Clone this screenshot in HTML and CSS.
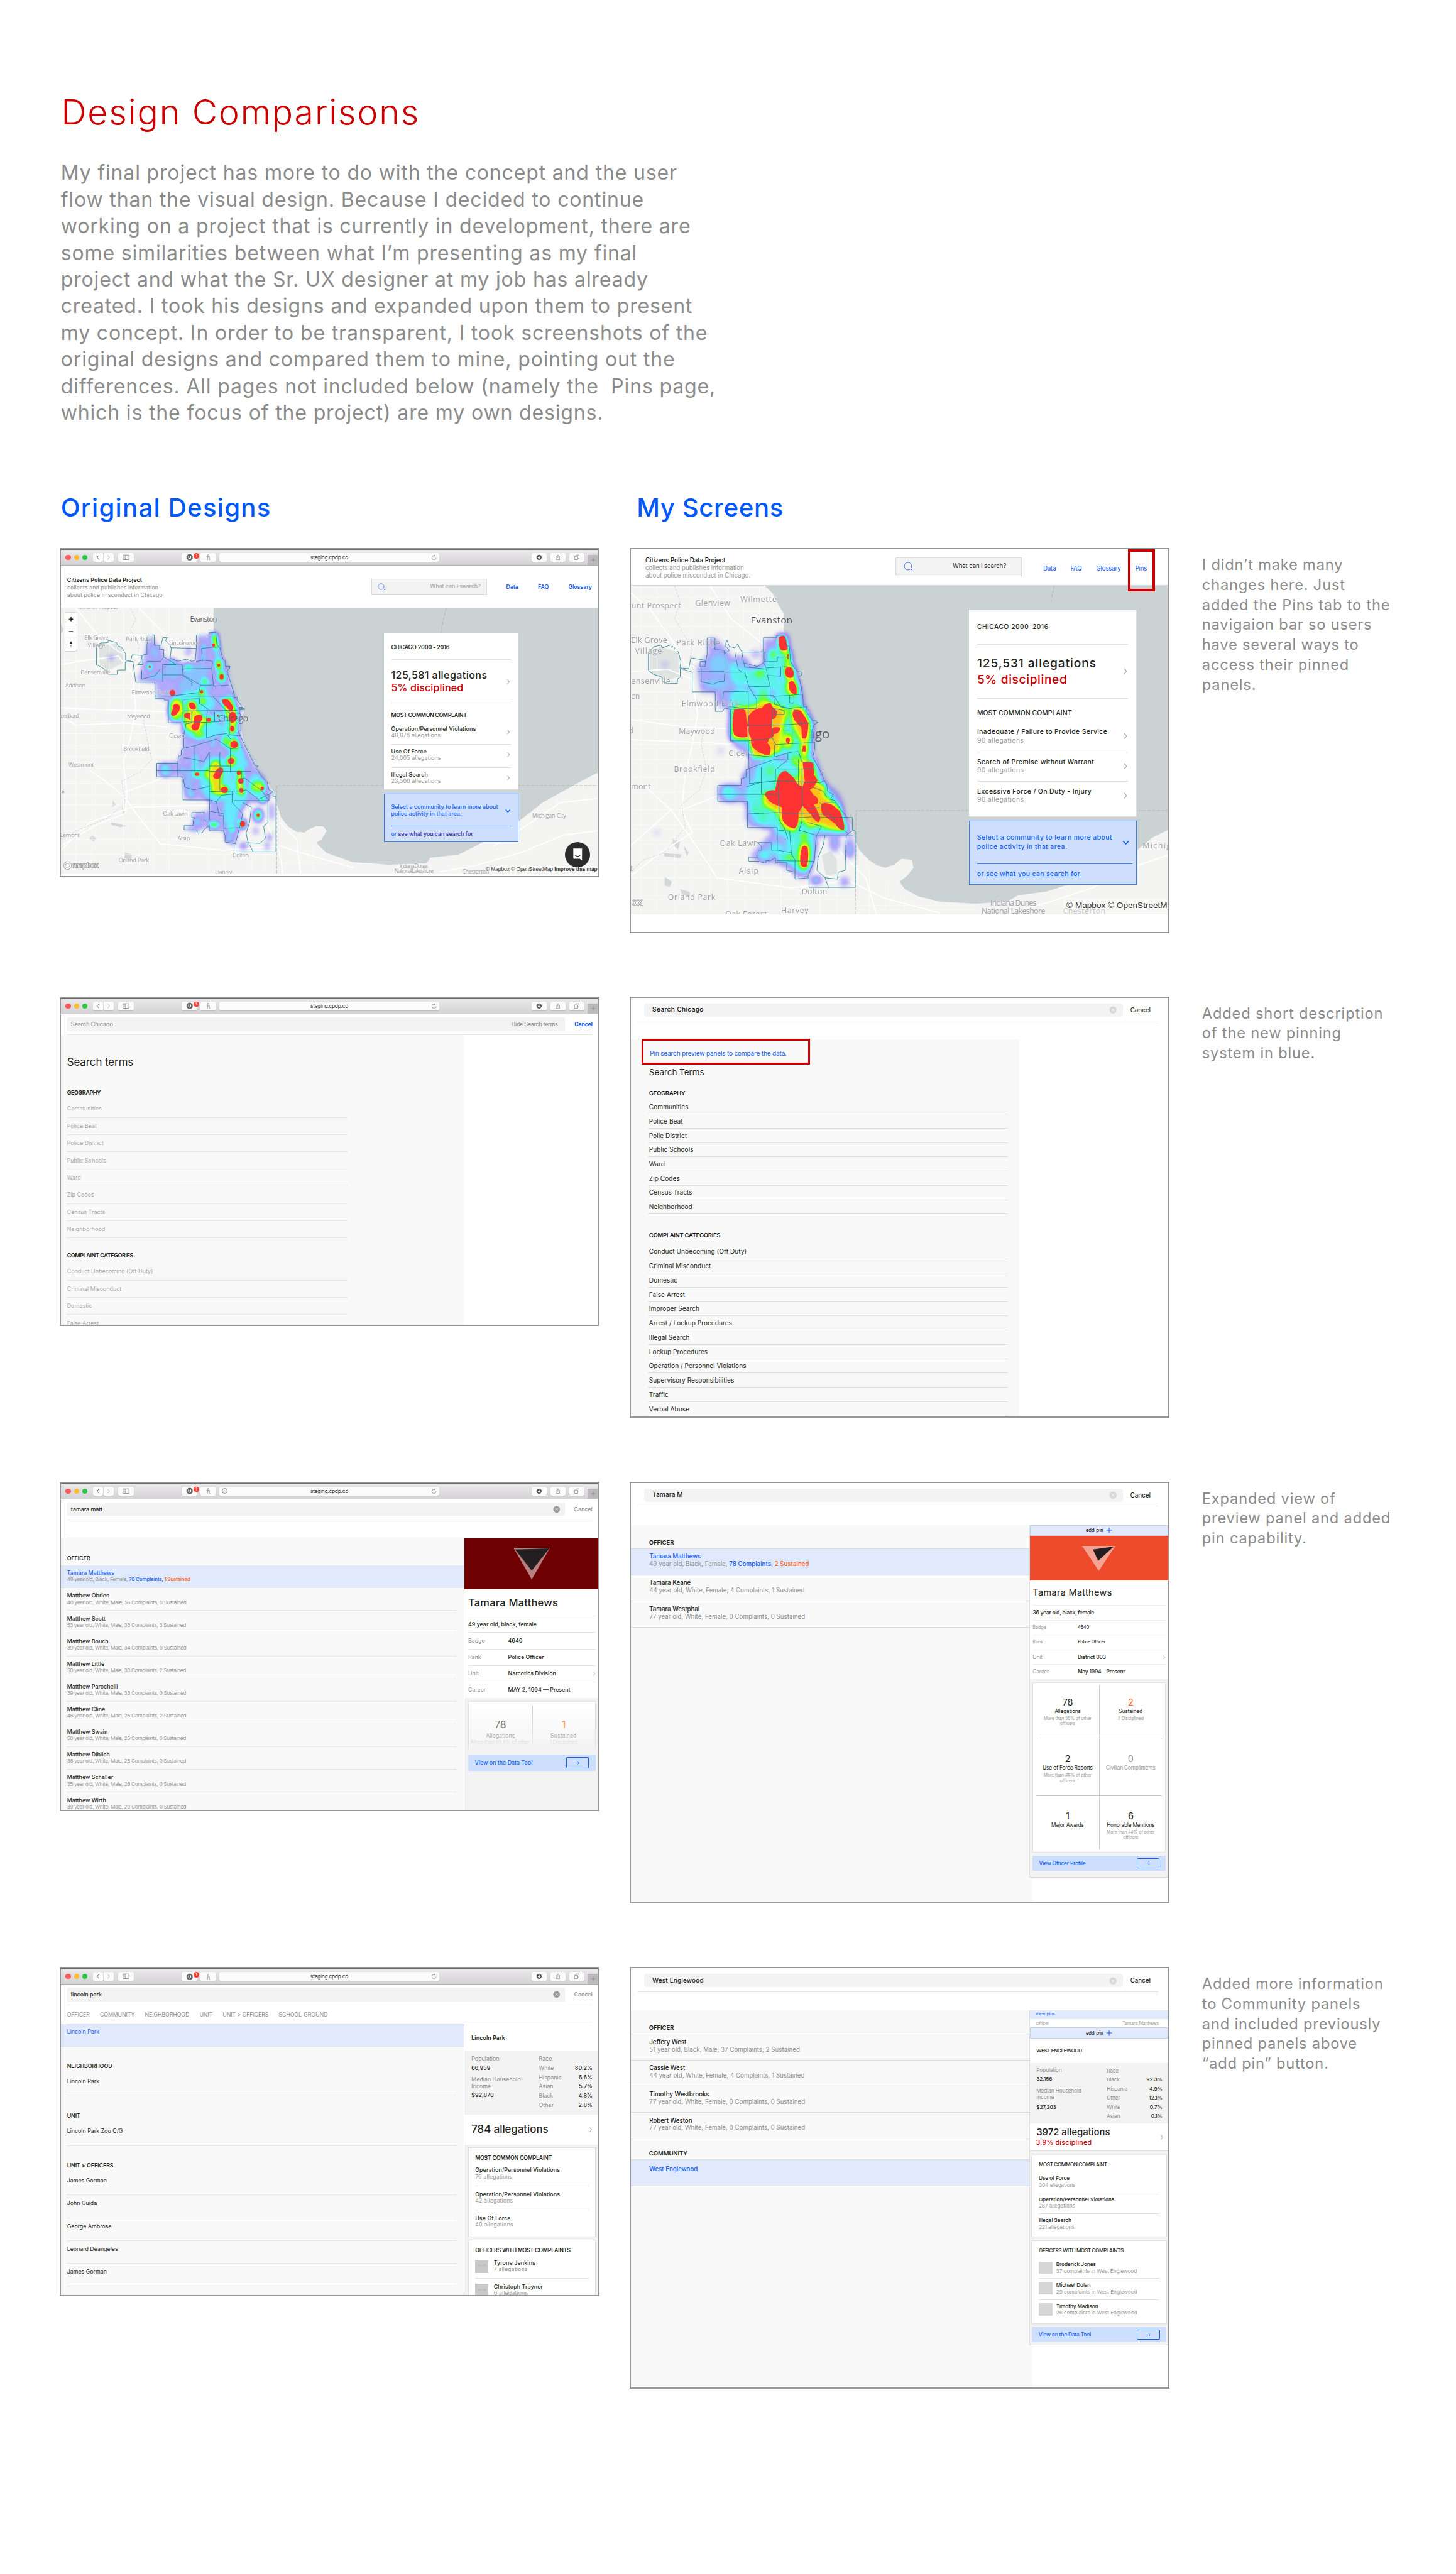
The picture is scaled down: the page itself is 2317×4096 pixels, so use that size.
FILE: index.html
```html
<!DOCTYPE html>
<html lang="en">
<head>
<meta charset="utf-8">
<title>Design Comparisons</title>
<link rel="stylesheet" href="styles.css">
</head>
<body>
<svg class="defs" aria-hidden="true">
  <defs>
    <symbol id="back" viewBox="0 0 10 12"><path d="M7 1.8 3.2 6 7 10.2" fill="none" stroke="#555" stroke-width="1.1"/></symbol>
    <symbol id="fwd" viewBox="0 0 10 12"><path d="M3 1.8 6.8 6 3 10.2" fill="none" stroke="#aaa" stroke-width="1.1"/></symbol>
    <symbol id="side" viewBox="0 0 14 12"><path d="M1 1.5h11.5v9H1zM5 1.5v9M2.3 3.5h1.4M2.3 5.2h1.4M2.3 6.9h1.4" fill="none" stroke="#777" stroke-width=".9"/></symbol>
    <symbol id="ublock" viewBox="0 0 14 14"><path d="M4.6 1h4.8L13 4.600v4.800L9.400 13H4.600L1 9.400V4.600z" fill="#666"/><path d="M5 4.200v3.400a2 2 0 0 0 4 0V4.200" fill="none" stroke="#fff" stroke-width="1.600"/></symbol>
    <symbol id="honey" viewBox="0 0 12 14"><path d="M2 5.500C4 5 5.500 4 5.700 2.500S4.400 1.200 4.300 3L4 12.500M4.200 8.500C5.500 6 8 6 7.800 8.500c-.2 2-.6 4 1.600 3.600M4.500 5.500h4" fill="none" stroke="#999" stroke-width="1"/></symbol>
    <symbol id="reload" viewBox="0 0 12 12"><path d="M9.700 6.500A4 4 0 1 1 6 2.500h1" fill="none" stroke="#777" stroke-width=".9"/><path d="M5.500.8 8 2.500 5.500 4.300z" fill="#777"/></symbol>
    <symbol id="down" viewBox="0 0 12 12"><circle cx="6" cy="6" r="5.200" fill="#555"/><path d="M6 2.800v5M3.700 6 6 8.400 8.300 6" fill="none" stroke="#fff" stroke-width="1.400"/></symbol>
    <symbol id="share" viewBox="0 0 12 14"><path d="M4 5.200H2v7h8v-7H8M6 9V1.500M3.900 3.400 6 1.300l2.100 2.100" fill="none" stroke="#777" stroke-width=".9"/></symbol>
    <symbol id="tabs" viewBox="0 0 12 12"><path d="M1.500 4h6.300v6.500H1.500zM4 4V1.500h6.500v6.300H7.800" fill="none" stroke="#777" stroke-width=".9"/></symbol>
    <symbol id="plus" viewBox="0 0 12 12"><path d="M6 .8v10.400M.8 6h10.400" fill="none" stroke="currentColor" stroke-width="1.200"/></symbol>
    <symbol id="lens" viewBox="0 0 16 16"><circle cx="7" cy="7" r="6" fill="none" stroke="#2f6fee" stroke-width="1"/><path d="m11.300 11.300 3.900 3.900" stroke="#2f6fee" stroke-width="1"/></symbol>
    <symbol id="chev" viewBox="0 0 8 12"><path d="M2 1.500 5.800 6 2 10.500" fill="none" stroke="currentColor" stroke-width="1.300"/></symbol>
    <symbol id="chevdown" viewBox="0 0 12 8"><path d="M2 1.800 6 6l4-4.200" fill="none" stroke="#1463f3" stroke-width="1.600"/></symbol>
    <symbol id="clear" viewBox="0 0 14 14"><circle cx="7" cy="7" r="6.500" fill="currentColor"/><path d="m4.800 4.800 4.400 4.400m0-4.400L4.800 9.200" stroke="#fff" stroke-width=".9"/></symbol>
    <symbol id="arrow" viewBox="0 0 10 8"><path d="M1 4h7M5.600 1.700 8 4 5.600 6.300" fill="none" stroke="#1463f3" stroke-width="1.200"/></symbol>

    <!-- alpha of the blurred shapes is used as density and mapped onto the heat ramp -->
    <filter id="heatA" filterUnits="userSpaceOnUse" x="60" y="330" width="640" height="1180" color-interpolation-filters="sRGB">
      <feGaussianBlur stdDeviation="5.500 9"/>
      <feColorMatrix values="0 0 0 1 0  0 0 0 1 0  0 0 0 1 0  0 0 0 1 0"/>
      <feComponentTransfer>
        <feFuncR type="table" tableValues=".35 .42 .5 .42 .3 .25 .4 .85 1 1 1"/>
        <feFuncG type="table" tableValues=".3 .35 .45 .7 .93 .97 1 1 .75 .25 .2"/>
        <feFuncB type="table" tableValues="1 1 1 1 1 .75 .15 .1 .1 .2 .2"/>
        <feFuncA type="table" tableValues="0 .32 .62 .78 .88 .92 .96 1 1 1 1"/>
      </feComponentTransfer>
    </filter>
    <filter id="heatB" filterUnits="userSpaceOnUse" x="40" y="300" width="680" height="1120" color-interpolation-filters="sRGB">
      <feGaussianBlur stdDeviation="8 11"/>
      <feColorMatrix values="0 0 0 1 0  0 0 0 1 0  0 0 0 1 0  0 0 0 1 0"/>
      <feComponentTransfer>
        <feFuncR type="table" tableValues=".35 .42 .5 .42 .3 .25 .4 .85 1 1 1"/>
        <feFuncG type="table" tableValues=".3 .35 .45 .7 .93 .97 1 1 .75 .25 .2"/>
        <feFuncB type="table" tableValues="1 1 1 1 1 .75 .15 .1 .1 .2 .2"/>
        <feFuncA type="table" tableValues="0 .32 .62 .78 .88 .92 .96 1 1 1 1"/>
      </feComponentTransfer>
    </filter>
  </defs>
</svg>

<main class="page">
  <header class="intro">
    <h1>Design Comparisons</h1>
    <p>My final project has more to do with the concept and the user
flow than the visual design. Because I decided to continue
working on a project that is currently in development, there are
some similarities between what I’m presenting as my final
project and what the Sr. UX designer at my job has already
created. I took his designs and expanded upon them to present
my concept. In order to be transparent, I took screenshots of the
original designs and compared them to mine, pointing out the
differences. All pages not included below (namely the  Pins page,
which is the focus of the project) are my own designs.</p>
  </header>

  <section class="board">
    <h2>Original Designs</h2>
    <h2 class="h2-mine">My Screens</h2>
    <span></span>

    <!-- Row 1: landing map -->
    <div class="cell">
      <div class="shot old">
        <div class="bar"><i class="dot red"></i><i class="dot yel"></i><i class="dot grn"></i><span class="btn b-back"><svg><use href="#back"/></svg></span><span class="btn b-fwd"><svg><use href="#fwd"/></svg></span><span class="btn b-side"><svg><use href="#side"/></svg></span><span class="btn b-u"><svg><use href="#ublock"/></svg><em>1</em></span><span class="btn b-h"><svg><use href="#honey"/></svg></span><span class="btn url">staging.cpdp.co<svg><use href="#reload"/></svg></span><span class="btn b-dl"><svg><use href="#down"/></svg></span><span class="btn b-r"><svg><use href="#share"/></svg></span><span class="btn b-r"><svg><use href="#tabs"/></svg></span><span class="newtab"><svg><use href="#plus"/></svg></span></div>
        <div class="home-head">
          <div class="brand"><b>Citizens Police Data Project</b><br>collects and publishes information<br>about police misconduct in Chicago</div>
          <div class="find"><svg><use href="#lens"/></svg><span>What can I search?</span></div>
          <nav><a>Data</a><a>FAQ</a><a>Glossary</a></nav>
        </div>
        <div class="map map-a">
          <svg class="tiles" viewBox="0 0 967 478">
            <rect width="967" height="478" fill="#f4f4f2"/>
            <g transform="matrix(.6314 0 0 .389 -10.5 -116.5)">
              <path fill="#cad2d3" d="M452 290V400L462 420 478 520 500 640 512 715 540 760 530 850 540 930 557 985 578 1050 605 1105 625 1150 632 1200 645 1270 665 1310 690 1335 712 1338 720 1325 745 1308 765 1310 775 1330 760 1370 745 1385 760 1410 775 1432 850 1475 950 1487 1060 1480 1070 1455 1150 1440 1200 1400 1320 1290 1390 1200 1490 1110 1560 1050V290z"/>
              <path fill="#d3d9d9" d="M105 1350l12 15-8 15-10-15zM160 1290l45 18-20 5-25-10zM200 1430l20 12-5 25-18-10zM165 1190l8 20-10 10zM190 1215l10 30-6 14zM16 370l8 30-8 20z"/>
              <path fill="#dfe4e3" d="M125 470 175 465 190 490 195 550 150 590 125 550z"/>
              <g class="roads">
                <path d="M16 420H450M16 480H120M16 540H250M16 590H320M16 655H480M16 710H500M16 770H330M16 825H360M16 880H380M16 935H420M16 985H520M16 1040H300M16 1110H370M16 1165H440M16 1210H600M16 1290H520M16 1370H520M16 1440H632M632 1480H960"/>
                <path d="M60 300V1527M105 300V1527M155 300V760M195 300V1527M240 300V1527M280 300V1527M325 300V1527M370 300V420M412 300V420M440 1240V1527M485 1300V1527M560 1430V1527M600 1430V1527M700 1330V1527M735 1390V1527"/>
              </g>
              <g class="hiways">
                <path d="M60 300 120 420 180 500 330 560 420 640 470 720 490 900 520 1100 560 1200 600 1280 640 1430 650 1527M16 560 90 540 180 520 220 600 230 760 215 900 195 1010 205 1160 200 1250 120 1300 16 1400M16 760 150 770 350 780 470 800M16 800 60 840 200 830 320 850M200 1150 300 1090 400 990 480 890M16 1420 100 1290 220 1220 360 1215 520 1210M100 1050 160 1120 200 1180 250 1290 300 1390 480 1420 640 1400 720 1440 850 1500M240 300 300 400 350 470 430 560M640 1290 690 1370 700 1527M1549 1330 1450 1350 1330 1430 1200 1490 1100 1520M1549 1180 1440 1200 1360 1290 1250 1400"/>
              </g>
              <path class="rivers" d="M215 300 230 350 215 400 240 470 235 520 255 560M250 800 262 900 275 1000 240 1060 190 1100 200 1200 150 1270 60 1330 16 1370"/>
              <path class="state" d="M632 1527V1120H1549M1115 300 1100 415"/>
              <g filter="url(#heatA)">
                <path opacity=".18" d="M408 430 440 425 455 405 466 470 478 530 495 575 492 600 508 690 515 730 532 770 525 850 535 930 570 1030 600 1110 620 1160 605 1195 535 1205 532 1300 512 1400 490 1375 480 1330 440 1320 440 1305 400 1335 370 1320 395 1300 395 1250 440 1240 441 1187 370 1180 365 1080 295 1075 295 1020 350 1010 365 945 365 880 374 830 325 825 325 730 290 710 290 645 235 635 250 560 265 440 280 430 300 520 345 545 400 560z"/>
                <g class="lo"><ellipse cx="160" cy="528" rx="9" ry="14"/><ellipse cx="290" cy="500" rx="20" ry="30"/><ellipse cx="335" cy="590" rx="25" ry="40"/><ellipse cx="290" cy="615" rx="25" ry="20"/><ellipse cx="400" cy="590" rx="40" ry="40"/><ellipse cx="400" cy="660" rx="50" ry="50"/><ellipse cx="380" cy="500" rx="10" ry="18"/><ellipse cx="315" cy="1048" rx="20" ry="30"/><ellipse cx="380" cy="1100" rx="12" ry="60"/><ellipse cx="605" cy="1400" rx="8" ry="18"/><ellipse cx="618" cy="1240" rx="8" ry="40"/><ellipse cx="572" cy="1330" rx="8" ry="16"/></g>
                <g class="mid"><ellipse cx="424" cy="480" rx="9" ry="18"/><ellipse cx="335" cy="546" rx="10" ry="15"/><ellipse cx="423" cy="525" rx="8" ry="15"/><ellipse cx="450" cy="742" rx="9" ry="18"/><ellipse cx="313" cy="1032" rx="8" ry="12"/><ellipse cx="315" cy="1067" rx="8" ry="10"/><ellipse cx="363" cy="1045" rx="6" ry="16"/><ellipse cx="388" cy="1162" rx="9" ry="16"/><ellipse cx="404" cy="1288" rx="9" ry="16"/><ellipse cx="537" cy="1400" rx="10" ry="15"/><ellipse cx="495" cy="1365" rx="9" ry="20"/><ellipse cx="612" cy="1360" rx="6" ry="14"/><ellipse cx="450" cy="928" rx="8" ry="15"/><ellipse cx="400" cy="1030" rx="12" ry="60"/><ellipse cx="500" cy="1240" rx="22" ry="80"/><ellipse cx="515" cy="1170" rx="35" ry="70"/><ellipse cx="520" cy="1000" rx="24" ry="70"/><ellipse cx="545" cy="1020" rx="8" ry="20"/><ellipse cx="395" cy="740" rx="65" ry="55"/><ellipse cx="420" cy="860" rx="60" ry="50"/><ellipse cx="500" cy="830" rx="22" ry="140"/><ellipse cx="460" cy="1090" rx="50" ry="110"/><ellipse cx="575" cy="1120" rx="25" ry="60"/><ellipse cx="579" cy="1258" rx="16" ry="36"/><path d="M445 420h18l12 120 6 80h-16l-12-120z"/></g>
                <g class="hi"><path d="M448 415h14l8 70h-18z"/><ellipse cx="270" cy="570" rx="8" ry="13"/><ellipse cx="380" cy="570" rx="9" ry="13" opacity=".8"/><ellipse cx="427" cy="637" rx="8" ry="14"/><ellipse cx="467" cy="562" rx="11" ry="24"/><ellipse cx="475" cy="618" rx="12" ry="26"/><ellipse cx="418" cy="686" rx="9" ry="17"/><ellipse cx="422" cy="730" rx="8" ry="16"/><ellipse cx="345" cy="770" rx="22" ry="52"/><ellipse cx="390" cy="752" rx="15" ry="26"/><ellipse cx="395" cy="820" rx="32" ry="50"/><ellipse cx="438" cy="815" rx="12" ry="18"/><ellipse cx="464" cy="797" rx="9" ry="14"/><ellipse cx="410" cy="880" rx="16" ry="20" opacity=".7"/><path d="M470 715h30l18 60 2 65-18 0-16-60z"/><ellipse cx="505" cy="858" rx="11" ry="24"/><ellipse cx="484" cy="915" rx="10" ry="24" opacity=".8"/><ellipse cx="511" cy="930" rx="15" ry="28"/><ellipse cx="502" cy="1006" rx="14" ry="28"/><ellipse cx="458" cy="1070" rx="20" ry="68"/><ellipse cx="405" cy="1068" rx="9" ry="14"/><ellipse cx="432" cy="1068" rx="8" ry="24" opacity=".8"/><ellipse cx="470" cy="1140" rx="26" ry="26"/><ellipse cx="528" cy="1090" rx="13" ry="48"/><ellipse cx="531" cy="1145" rx="11" ry="22"/><ellipse cx="580" cy="1125" rx="22" ry="26" opacity=".8"/><ellipse cx="592" cy="1186" rx="9" ry="16"/><ellipse cx="579" cy="1258" rx="10" ry="20"/><ellipse cx="534" cy="1298" rx="12" ry="22"/><ellipse cx="453" cy="1302" rx="14" ry="14"/><ellipse cx="504" cy="1325" rx="9" ry="14" opacity=".8"/></g>
              </g>
              <g class="cores"><ellipse cx="452" cy="470" rx="4" ry="8"/><ellipse cx="270" cy="571" rx="3" ry="5"/><ellipse cx="467" cy="563" rx="4" ry="8"/><ellipse cx="475" cy="617" rx="6" ry="13"/><ellipse cx="418" cy="686" rx="4" ry="8"/><ellipse cx="335" cy="691" rx="8" ry="15"/><path d="M335 750q10-15 20 0 4 20-6 35-6 15-14 12-8-5-2-20 4-12 2-27zM382 740q8-10 16 2 6 15 2 25-8 5-14-4-6-10-4-23zM370 788q8-8 16-2v30q-8-8-16-10-4-10 0-18zM398 800q12-15 20-4 6 15-4 30 0 20-8 38-12 5-16-8-4-15 6-24-2-18 2-32zM476 724q10-12 20 2 8 15 12 30 0 18-8 20-6-5-10-18-14-14-14-34zM498 785q8-12 16 0 8 20 2 35-8 14-16 6-8-20-2-41zM460 1050q6-18 16-12 8 10 0 28-6 30-18 24-12-8-4-24z"/><ellipse cx="438" cy="816" rx="7" ry="9"/><ellipse cx="464" cy="797" rx="3" ry="6"/><ellipse cx="505" cy="857" rx="6" ry="14"/><ellipse cx="511" cy="930" rx="11" ry="17"/><ellipse cx="502" cy="1006" rx="9" ry="15"/><ellipse cx="405" cy="1068" rx="6" ry="8"/><ellipse cx="524" cy="1062" rx="6" ry="10"/><ellipse cx="530" cy="1099" rx="8" ry="13"/><ellipse cx="531" cy="1143" rx="6" ry="12"/><ellipse cx="483" cy="1140" rx="10" ry="15"/><ellipse cx="591" cy="1133" rx="5" ry="8"/><ellipse cx="579" cy="1258" rx="4" ry="8"/><ellipse cx="535" cy="1298" rx="8" ry="14"/></g>
              <path class="edges" d="M402 423H440V412H458L462 470 470 480 478 530 486 545V568H498V578L490 590 500 640 508 680 512 712H520L518 722 535 758H525V764H540V770H525V776L530 800V868H522L540 930 557 985 570 1028 580 1030 572 1040 578 1050 590 1080 605 1105 610 1140 622 1150V1170H630V1427H516V1390L485 1382V1350L480 1330H440V1305L424 1325 420 1340H405V1325H368V1306H394V1282L400 1270 390 1268V1245H428V1285H440L441 1187H365V1080H290V1017H350L352 985 360 980V955L367 948V890L374 830H323V725H312V718H285V642H230L222 545 200 548V585H178L177 605H152L140 580 118 560V470L130 460 150 458 152 448 175 458 180 475 190 480 201 510V540L215 545 220 515 248 518 245 545 235 560 250 560V515L262 513V470L265 423H283V470L298 472V490H310V525L300 545H262M283 470H302L308 435H320L315 448 328 470 330 482 403 485 400 540 390 545 375 535 350 545 328 530 332 480M310 525 345 560H307V640M247 585V628L265 620 285 612 300 580M307 560 360 558 365 580 447 578 449 545 425 540 403 545M403 485V423M420 545 418 485 447 480 470 478M447 578 452 660 495 655M307 608H362L390 640V660M362 558 365 608 415 655 410 690 330 706H285M415 655H450M410 690V718L365 722V775L520 772M330 700 365 706H510M365 775V825L432 828 434 770M390 775V830L374 835M432 828 500 820M412 715V740L440 770M450 706 480 760 500 790M497 775V885L528 890M455 780V825M432 828V900L460 885 490 880 500 905M367 948 400 935 440 915 460 905 500 950 535 946M399 935V1055M367 990 399 1000 425 1010 440 965 440 1055M350 1017V1080M290 1052H440V1187M365 1080 370 1128 395 1140 440 1125M440 1055H560M440 1030H500M470 965V1030M500 945V1060M470 1030V1145M532 1055 530 1145 440 1148M530 1090 540 1085 590 1145 610 1190M505 1145V1200L535 1250 530 1290 515 1385M441 1187 460 1195 468 1260H480L482 1330M460 1195 475 1165 510 1160M530 1145 545 1140 580 1185 622 1150M510 1190H610V1160M535 1200 560 1220 555 1290 545 1340 550 1380 565 1427M607 1190V1290L595 1310 600 1365 585 1388 545 1385M441 1240 480 1250M440 1285H470M480 1318 535 1315"/>
              <g class="labels">
                <g transform="translate(66 303) scale(1 1.623)"><text textLength="112">Mount Prospect</text></g>
                <g transform="translate(385 362) scale(1 1.623)"><text class="town" textLength="77">Evanston</text></g>
                <g transform="translate(84 446) scale(1 1.623)"><text textLength="68">Elk Grove</text></g>
                <g transform="translate(93 479) scale(1 1.623)"><text textLength="50">Village</text></g>
                <g transform="translate(202 452) scale(1 1.623)"><text textLength="79">Park Ridge</text></g>
                <g transform="translate(325 467) scale(1 1.623)"><text textLength="90">Lincolnwood</text></g>
                <g transform="translate(73 606) scale(1 1.623)"><text textLength="84">Bensenville</text></g>
                <g transform="translate(29 667) scale(1 1.623)"><text textLength="58">Addison</text></g>
                <g transform="translate(219 697) scale(1 1.623)"><text textLength="105">Elmwood Park</text></g>
                <g transform="translate(8 806) scale(1 1.623)"><text textLength="60">Lombard</text></g>
                <g transform="translate(205 808) scale(1 1.623)"><text textLength="66">Maywood</text></g>
                <g transform="translate(325 898) scale(1 1.623)"><text textLength="47">Cicero</text></g>
                <g transform="translate(195 959) scale(1 1.623)"><text textLength="74">Brookfield</text></g>
                <g transform="translate(38 1032) scale(1 1.623)"><text textLength="73">Westmont</text></g>
                <g transform="translate(18 1162) scale(1 1.623)"><text>e</text></g>
                <g transform="translate(308 1260) scale(1 1.623)"><text textLength="70">Oak Lawn</text></g>
                <g transform="translate(349 1372) scale(1 1.623)"><text textLength="36">Alsip</text></g>
                <g transform="translate(14 1360) scale(1 1.623)"><text textLength="56">Lemont</text></g>
                <g transform="translate(506 1452) scale(1 1.623)"><text textLength="47">Dolton</text></g>
                <g transform="translate(181 1475) scale(1 1.623)"><text textLength="87">Orland Park</text></g>
                <g transform="translate(457 1530) scale(1 1.623)"><text textLength="48">Harvey</text></g>
                <g transform="translate(983 1502) scale(1 1.623)"><text textLength="81">Indiana Dunes</text></g>
                <g transform="translate(968 1525) scale(1 1.623)"><text textLength="112">National Lakeshore</text></g>
                <g transform="translate(1161 1527) scale(1 1.623)"><text textLength="78">Chesterton</text></g>
                <g transform="translate(1361 1269) scale(1 1.623)"><text textLength="97">Michigan City</text></g>
                <g transform="translate(465 822) scale(1 1.623)"><text class="city" textLength="86">Chicago</text></g>
              </g>
            </g>
            <g class="mapbox"><circle cx="12" cy="463.500" r="7"/><path d="M12 459.500a4 4 0 1 1-3.500 6.500l-1 1 .5-4a4 4 0 0 1 4-3.500z"/><text x="21" y="468" textLength="47">mapbox</text></g>
          </svg>
          <div class="zoomer"><b>+</b><b>−</b><b class="compass"></b></div>
          <div class="card">
            <div class="c-title">CHICAGO 2000 - 2016</div>
            <div class="c-big"><div>125,581 allegations<br><span class="crimson">5% disciplined</span></div><svg><use href="#chev"/></svg></div>
            <div class="c-h">MOST COMMON COMPLAINT</div>
            <div class="c-item"><div>Operation/Personnel Violations<br><span>40,076 allegations</span></div><svg><use href="#chev"/></svg></div>
            <div class="c-item"><div>Use Of Force<br><span>24,005 allegations</span></div><svg><use href="#chev"/></svg></div>
            <div class="c-item"><div>Illegal Search<br><span>23,500 allegations</span></div><svg><use href="#chev"/></svg></div>
          </div>
          <div class="cta-map">
            <div class="cm-top"><div>Select a community to learn more about<br>police activity in that area.</div><svg><use href="#chevdown"/></svg></div>
            <div class="cm-or">or <span>see what you can search for</span></div>
          </div>
          <div class="credit">© Mapbox © OpenStreetMap <b>Improve this map</b></div>
          <div class="chat"><svg viewBox="0 0 24 26"><path d="M3 1h18v24l-5-3H3z" fill="#fff"/><path d="M7 15q5 4 10 0" fill="none" stroke="#2b2b2b" stroke-width="1.500"/></svg></div>
        </div>
      </div>
    </div>

    <div class="cell">
      <div class="shot new first">
        <div class="home-head">
          <div class="brand"><b>Citizens Police Data Project</b><br>collects and publishes information<br>about police misconduct in Chicago.</div>
          <div class="find"><svg><use href="#lens"/></svg><span>What can I search?</span></div>
          <nav><a>Data</a><a>FAQ</a><a>Glossary</a><a>Pins</a></nav>
        </div>
        <div class="map map-b">
          <svg class="tiles" viewBox="0 0 967 592">
            <rect width="967" height="592" fill="#f4f4f2"/>
            <g transform="matrix(.6378 0 0 .4528 -17 -76)">
              <path fill="#cad2d3" d="M398 160 425 195 440 235 458 280V340L470 400 485 470 505 560 515 640 530 690 545 740V830L560 900 580 960 600 1020 620 1070 650 1120 660 1180 672 1220 700 1260 720 1280 745 1290 770 1278 790 1255 820 1258 825 1290 805 1325 785 1345 800 1375 840 1405 900 1425 1000 1433 1090 1425 1120 1400 1200 1385 1300 1340 1456 1220 1500 1170 1550 1135V160z"/>
              <path fill="#d3d9d9" d="M122 1325l20 20-5 22-15-5zM120 1232l50 5-5 15-45-8zM165 1375l28 12v22l-22-14zM145 1175l20 12-5 30-15-18zM175 1200l15 30-5 15z"/>
              <path fill="#dfe4e3" d="M80 435 112 410 160 435 162 530 125 545 80 515zM565 1240l25-15 18 30v60l-30 5z"/>
              <g class="roads">
                <path d="M20 215H440M20 270H455M20 330H460M20 420H100M20 500H210M20 545H200M20 590H270M20 640H300M20 700H310M20 800H360M20 860H370M20 930H360M20 990H280M20 1060H360M20 1120H360M20 1180H440M20 1260H360M20 1330H520M20 1400H660M660 1440H1000"/>
                <path d="M55 168V1476M100 168V1476M150 560V1476M200 168V1476M250 168V380M300 168V380M345 168V380M390 168V380M430 200V370M250 640V1476M300 670V1476M350 930V1476M400 1280V1476M450 1280V1476M500 1340V1476M560 1375V1476M610 1375V1476M700 1290V1476M745 1350V1476M800 1400V1476"/>
              </g>
              <g class="hiways">
                <path d="M20 190 80 260 150 400 180 480 340 540 430 640 500 740 520 950 560 1080 620 1230 690 1330 720 1476M20 510 130 500 200 540 215 680 200 800 180 920 170 1060 200 1150 110 1230 20 1330M20 700 180 730 360 740 520 760M20 780 200 790 340 800M170 1060 260 1010 360 950 480 840M20 1210 140 1060 60 960M140 1060 200 1180 270 1330 480 1370 640 1340 740 1410 900 1470M250 168 310 300 400 400 470 540M1543 1240 1440 1290 1330 1370 1200 1430 1080 1476"/>
              </g>
              <path class="rivers" d="M150 168 165 230 150 300 200 420 190 470 220 500M235 720 225 800 240 900 220 980 170 1040 180 1130 120 1230 60 1260 25 1310"/>
              <path class="state" d="M660 1476 663 1063H1543M1222 168 1213 235"/>
              <g class="labels big"><g transform="translate(455 775) scale(1 1.409)"><text class="city" textLength="133">Chicago</text></g></g>
              <g filter="url(#heatB)">
                <path opacity=".22" d="M405 385 440 380 455 362 468 420 478 480 500 545 512 610 520 670 540 720 540 830 560 900 590 990 620 1070 645 1125 635 1155 555 1165 540 1270 530 1325 500 1330 480 1300 440 1270 390 1265 365 1245 400 1190 445 1120 360 1125 360 1030 275 1020 275 965 340 960 362 870 362 780 312 780 312 660 270 640 268 590 225 590 215 495 248 440 245 380 265 380 300 430 330 500 400 490z"/>
                <g class="lo"><ellipse cx="123" cy="482" rx="7" ry="10"/><ellipse cx="275" cy="480" rx="28" ry="40"/><ellipse cx="268" cy="560" rx="35" ry="22"/><ellipse cx="380" cy="440" rx="14" ry="14"/><ellipse cx="310" cy="990" rx="30" ry="30"/><ellipse cx="380" cy="1080" rx="30" ry="40"/><ellipse cx="100" cy="1150" rx="5" ry="8"/><ellipse cx="280" cy="825" rx="6" ry="9"/><ellipse cx="645" cy="1200" rx="10" ry="50"/></g>
                <g class="mid"><ellipse cx="335" cy="510" rx="30" ry="60"/><ellipse cx="340" cy="615" rx="35" ry="40"/><ellipse cx="400" cy="540" rx="50" ry="50"/><ellipse cx="430" cy="475" rx="25" ry="40"/><ellipse cx="470" cy="620" rx="40" ry="80"/><ellipse cx="405" cy="740" rx="100" ry="110"/><ellipse cx="500" cy="780" rx="38" ry="130"/><ellipse cx="430" cy="920" rx="55" ry="60"/><ellipse cx="300" cy="980" rx="16" ry="14"/><ellipse cx="305" cy="1015" rx="18" ry="10"/><ellipse cx="350" cy="930" rx="8" ry="18"/><ellipse cx="380" cy="1010" rx="30" ry="70"/><ellipse cx="410" cy="1100" rx="26" ry="34"/><ellipse cx="480" cy="1040" rx="90" ry="130"/><ellipse cx="570" cy="1060" rx="55" ry="95"/><ellipse cx="505" cy="1200" rx="40" ry="105"/><ellipse cx="404" cy="1240" rx="16" ry="24"/><ellipse cx="438" cy="1215" rx="20" ry="24"/><ellipse cx="550" cy="1340" rx="16" ry="14"/><ellipse cx="630" cy="1345" rx="10" ry="16"/><ellipse cx="602" cy="1190" rx="12" ry="34"/><ellipse cx="645" cy="1220" rx="9" ry="30"/><path d="M440 365h26l14 100 20 100 12 60h-36l-20-130z"/></g>
                <g class="hi"><path d="M442 365h24l8 65-10 10-18-10z"/><ellipse cx="428" cy="436" rx="13" ry="13" opacity=".9"/><ellipse cx="472" cy="455" rx="9" ry="30"/><ellipse cx="474" cy="512" rx="18" ry="32"/><ellipse cx="390" cy="515" rx="16" ry="20" opacity=".5"/><ellipse cx="483" cy="573" rx="18" ry="34"/><ellipse cx="400" cy="615" rx="20" ry="30" opacity=".7"/><rect x="308" y="648" width="52" height="134" rx="12"/><path d="M358 650 410 625 440 640 470 665 460 710 450 790 425 850 370 855 360 790z"/><path d="M478 650h40l20 60-2 70-30 5-24-60z"/><ellipse cx="517" cy="815" rx="12" ry="40"/><ellipse cx="470" cy="785" rx="14" ry="30"/><ellipse cx="442" cy="815" rx="10" ry="15"/><path d="M500 860 545 862 560 950 580 960 570 1000 620 1050 640 1150 610 1150 560 1120 530 1130 505 1090 490 1150 455 1130 440 1070 400 1040 400 990 440 990 440 930 470 915 500 950z"/><ellipse cx="420" cy="905" rx="10" ry="18" opacity=".5"/><ellipse cx="488" cy="862" rx="12" ry="20" opacity=".6"/><ellipse cx="515" cy="1165" rx="9" ry="12"/><ellipse cx="517" cy="1245" rx="18" ry="60"/><ellipse cx="465" cy="1250" rx="22" ry="16" opacity=".7"/><ellipse cx="550" cy="1340" rx="10" ry="8" opacity=".6"/></g>
              </g>
              <g class="cores"><path d="M444 375q8-12 18-6l8 50q-10 12-20 4-8-20-6-48zM465 495q10-10 18 4 8 20 0 34-10 6-18-6-6-15 0-32zM474 552q8-10 14 0 10 25 6 46-12 4-18-12-6-18-2-34zM318 662q18-12 32 2 6 60 6 105-20 8-38-8-8-40 0-99zM370 668q16-16 26-12 10-24 26-20 4 18 18 32-2 34-14 30l-2 36q18-6 24 0 0 20-16 24-2 15-14 16l-6 20q14 15 6 48-20 2-40-22-14-10-12-46-10-20-6-46l-6 2 4-44zM486 664q15-6 22 4 10 20 20 46 0 40-8 62h-10l-2-44-20-30q-8-22-2-38zM465 776q6-6 10 0 2 12-4 22-8-6-6-22zM512 805h8l1 22h-10zM512 872q16-12 30 2l2 46 10 22-12 30-10 6 10 22q18 14 12 34l-10 4 16 46q4 16-4 26-14-10-20-30l-24-36-12 28q2 50-12 62-20-5-32-30-6-32-2-54l-18-10q-20-8-32-42 8-20 30-16l8-52q10-28 24-24l22 28q8 30 24 32l6-20z"/><path d="M566 1034q24-6 42 20 14 14 16 40 8 32 4 46-14 0-24-24l-36-38q-8-26-2-44zM510 1208q8-12 16 2 4 40-2 74-10 8-18-4-4-36 4-72z"/><ellipse cx="470" cy="450" rx="2" ry="10"/></g>
              <path class="edges" d="M401 375H438V365H458L468 392 466 408H474L478 470 486 490 498 510 510 512 508 525 500 530 505 550 512 605 514 650H525L520 665 540 705H550V712H556L545 720 538 745V790H546V815L540 850 562 905 572 940 580 960 582 985 598 1000 590 1018 602 1022 620 1060 630 1075 636 1090H652V1138L660 1145V1368H530V1330L490 1335V1308L467 1300V1270H436L434 1250 420 1262H408V1272L386 1264H359V1248H386V1220H396V1205L384 1190H424V1220H440V1130H356V1026H272V962H338V935L352 930V900L360 897V870L358 785H308V660L292 655 285 668H265V590H200V512L166 497V530L158 540V557H128L115 548V532L90 520 76 505V432L92 410 112 405 115 415 140 403 160 430 168 470 165 495 190 498 196 455 238 465 236 490H222V470L238 468 242 440V376H264V422L290 425V440L305 425 292 405 298 385 305 410 320 415 328 400 340 432H390L400 430M225 495V550L258 560 275 550 290 548 292 510 215 510M320 432 330 500 340 512H292V440M340 432 345 475 385 490 405 470V430M401 375V470L408 495 470 490M405 470H440V452H470M346 475 348 492 378 495 410 500 412 525 450 528V490M412 525 420 568 360 570 348 512M420 568V605L430 608 468 605 508 600M360 570 382 620 382 655 308 660M382 655 355 658 285 645 288 590 358 588V785L425 775M372 605H430L432 640 470 655 512 652M432 660V680H460V665L425 655V770L435 800 538 792M358 724 450 722 530 715M432 608 450 650 490 660 510 725M358 840 430 850 480 830 500 828 510 870 545 870M432 802V850M470 832V860L435 900V945L362 955V897M360 895 430 860 500 862V970M395 890V995M352 968 395 950 445 945 560 952 572 945M272 998H445V1070L356 1076M445 897H545M445 945V1100L460 1130 470 1175M510 895V1105L502 1140M445 1070 480 1075 580 1078M530 1055 560 1050M540 970 570 985 580 1010M560 1030 600 1100 640 1155M572 1030H605M502 1090 540 1088 640 1090M500 1140 550 1160H655M525 1110 565 1125 550 1165 545 1260 525 1330M440 1140 475 1145 480 1235 490 1260V1308M440 1220 480 1230M440 1262 545 1264M575 1160 570 1200 555 1250 552 1300 575 1330 610 1335 612 1308 632 1300 632 1275 635 1160 655 1140M575 1330 585 1368M475 605V635H487V605"/>
              <g class="labels big">
                <g transform="translate(28 258) scale(1 1.409)"><text textLength="140">unt Prospect</text></g>
                <g transform="translate(208 249) scale(1 1.409)"><text textLength="99">Glenview</text></g>
                <g transform="translate(336 234) scale(1 1.409)"><text textLength="102">Wilmette</text></g>
                <g transform="translate(365 317) scale(1 1.409)"><text class="town" textLength="118">Evanston</text></g>
                <g transform="translate(27 395) scale(1 1.409)"><text textLength="102">Elk Grove</text></g>
                <g transform="translate(38 438) scale(1 1.409)"><text textLength="76">Village</text></g>
                <g transform="translate(155 406) scale(1 1.409)"><text textLength="123">Park Ridge</text></g>
                <g transform="translate(27 557) scale(1 1.409)"><text textLength="111">ensenville</text></g>
                <g transform="translate(27 617) scale(1 1.409)"><text textLength="25">on</text></g>
                <g transform="translate(170 647) scale(1 1.409)"><text textLength="162">Elmwood Park</text></g>
                <g transform="translate(20 755) scale(1 1.409)"><text>d</text></g>
                <g transform="translate(162 757) scale(1 1.409)"><text textLength="102">Maywood</text></g>
                <g transform="translate(302 846) scale(1 1.409)"><text textLength="72">Cicero</text></g>
                <g transform="translate(148 907) scale(1 1.409)"><text textLength="116">Brookfield</text></g>
                <g transform="translate(27 979) scale(1 1.409)"><text textLength="56">mont</text></g>
                <g transform="translate(278 1204) scale(1 1.409)"><text textLength="108">Oak Lawn</text></g>
                <g transform="translate(331 1314) scale(1 1.409)"><text textLength="56">Alsip</text></g>
                <g transform="translate(24 1303) scale(1 1.409)"><text>t</text></g>
                <g transform="translate(509 1395) scale(1 1.409)"><text textLength="72">Dolton</text></g>
                <g transform="translate(131 1417) scale(1 1.409)"><text textLength="134">Orland Park</text></g>
                <g transform="translate(451 1471) scale(1 1.409)"><text textLength="77">Harvey</text></g>
                <g transform="translate(293 1486) scale(1 1.409)"><text textLength="118">Oak Forest</text></g>
                <g transform="translate(1042 1440) scale(1 1.409)"><text textLength="130">Indiana Dunes</text></g>
                <g transform="translate(1017 1472) scale(1 1.409)"><text textLength="180">National Lakeshore</text></g>
                <g transform="translate(1247 1472) scale(1 1.409)"><text textLength="120">Chesterton</text></g>
                <g transform="translate(1472 1213) scale(1 1.409)"><text textLength="110">Michigan</text></g>
              </g>
            </g>
            <g class="mapbox"><text class="ox" x="1" y="576">ox</text></g>
          </svg>
          <div class="card">
            <div class="c-title">CHICAGO 2000–2016</div>
            <div class="c-big"><div>125,531 allegations<br><span class="crimson">5% disciplined</span></div><svg><use href="#chev"/></svg></div>
            <div class="c-h">MOST COMMON COMPLAINT</div>
            <div class="c-item"><div>Inadequate / Failure to Provide Service<br><span>90 allegations</span></div><svg><use href="#chev"/></svg></div>
            <div class="c-item"><div>Search of Premise without Warrant<br><span>90 allegations</span></div><svg><use href="#chev"/></svg></div>
            <div class="c-item"><div>Excessive Force / On Duty - Injury<br><span>90 allegations</span></div><svg><use href="#chev"/></svg></div>
          </div>
          <div class="cta-map">
            <div class="cm-top"><div>Select a community to learn more about<br>police activity in that area.</div><svg><use href="#chevdown"/></svg></div>
            <div class="cm-or">or <span>see what you can search for</span></div>
          </div>
          <div class="credit">© Mapbox © OpenStreetMap</div>
        </div>
      </div>
      <div class="mark mark-pins"></div>
    </div>
    <p class="note">I didn’t make many
changes here. Just
added the Pins tab to the
navigaion bar so users
have several ways to
access their pinned
panels.</p>

    <!-- Row 2: search terms -->
    <div class="cell">
      <div class="shot old">
        <div class="bar"><i class="dot red"></i><i class="dot yel"></i><i class="dot grn"></i><span class="btn b-back"><svg><use href="#back"/></svg></span><span class="btn b-fwd"><svg><use href="#fwd"/></svg></span><span class="btn b-side"><svg><use href="#side"/></svg></span><span class="btn b-u"><svg><use href="#ublock"/></svg><em>1</em></span><span class="btn b-h"><svg><use href="#honey"/></svg></span><span class="btn url">staging.cpdp.co<svg><use href="#reload"/></svg></span><span class="btn b-dl"><svg><use href="#down"/></svg></span><span class="btn b-r"><svg><use href="#share"/></svg></span><span class="btn b-r"><svg><use href="#tabs"/></svg></span><span class="newtab"><svg><use href="#plus"/></svg></span></div>
        <div class="topbar"><div class="field ghost">Search Chicago<small>Hide Search terms</small></div><b class="blue">Cancel</b></div>
        <div class="terms">
          <h3>Search terms</h3>
          <h4>GEOGRAPHY</h4>
          <ul><li>Communities</li><li>Police Beat</li><li>Police District</li><li>Public Schools</li><li>Ward</li><li>Zip Codes</li><li>Census Tracts</li><li>Neighborhood</li></ul>
          <h4>COMPLAINT CATEGORIES</h4>
          <ul><li>Conduct Unbecoming (Off Duty)</li><li>Criminal Misconduct</li><li>Domestic</li><li>False Arrest</li></ul>
        </div>
      </div>
    </div>
    <div class="cell">
      <div class="shot new">
        <div class="topbar"><div class="field strong">Search Chicago<svg><use href="#clear"/></svg></div><span>Cancel</span></div>
        <div class="terms">
          <p>Pin search preview panels to compare the data.</p>
          <h3>Search Terms</h3>
          <h4>GEOGRAPHY</h4>
          <ul><li>Communities</li><li>Police Beat</li><li>Polie District</li><li>Public Schools</li><li>Ward</li><li>Zip Codes</li><li>Census Tracts</li><li>Neighborhood</li></ul>
          <h4>COMPLAINT CATEGORIES</h4>
          <ul><li>Conduct Unbecoming (Off Duty)</li><li>Criminal Misconduct</li><li>Domestic</li><li>False Arrest</li><li>Improper Search</li><li>Arrest / Lockup Procedures</li><li>Illegal Search</li><li>Lockup Procedures</li><li>Operation / Personnel Violations</li><li>Supervisory Responsibilities</li><li>Traffic</li><li>Verbal Abuse</li></ul>
        </div>
      </div>
      <div class="mark mark-terms"></div>
    </div>
    <p class="note">Added short description
of the new pinning
system in blue.</p>

    <!-- Row 3: officer preview -->
    <div class="cell">
      <div class="shot old">
        <div class="bar"><i class="dot red"></i><i class="dot yel"></i><i class="dot grn"></i><span class="btn b-back"><svg><use href="#back"/></svg></span><span class="btn b-fwd"><svg><use href="#fwd"/></svg></span><span class="btn b-side"><svg><use href="#side"/></svg></span><span class="btn b-u"><svg><use href="#ublock"/></svg><em>1</em></span><span class="btn b-h"><svg><use href="#honey"/></svg></span><span class="btn url"><i class="add"><svg><use href="#plus"/></svg></i>staging.cpdp.co<svg><use href="#reload"/></svg></span><span class="btn b-dl"><svg><use href="#down"/></svg></span><span class="btn b-r"><svg><use href="#share"/></svg></span><span class="btn b-r"><svg><use href="#tabs"/></svg></span><span class="newtab"><svg><use href="#plus"/></svg></span></div>
        <div class="topbar"><div class="field">tamara matt<svg><use href="#clear"/></svg></div><span>Cancel</span></div>
        <div class="cats"></div>
        <div class="split">
          <div class="list">
            <h4>OFFICER</h4>
            <ul>
              <li class="on"><b>Tamara Matthews</b><br>49 year old, Black, Female, <i class="bl">78 Complaints,</i> <i class="or">1 Sustained</i></li>
              <li><b>Matthew Obrien</b><br>40 year old, White, Male, 56 Complaints, 0 Sustained</li>
              <li><b>Matthew Scott</b><br>53 year old, White, Male, 33 Complaints, 3 Sustained</li>
              <li><b>Matthew Bouch</b><br>39 year old, White, Male, 34 Complaints, 0 Sustained</li>
              <li><b>Matthew Little</b><br>50 year old, White, Male, 33 Complaints, 2 Sustained</li>
              <li><b>Matthew Parochelli</b><br>39 year old, White, Male, 33 Complaints, 0 Sustained</li>
              <li><b>Matthew Cline</b><br>46 year old, White, Male, 26 Complaints, 2 Sustained</li>
              <li><b>Matthew Swain</b><br>50 year old, White, Male, 25 Complaints, 0 Sustained</li>
              <li><b>Matthew Diblich</b><br>38 year old, White, Male, 25 Complaints, 0 Sustained</li>
              <li><b>Matthew Schaller</b><br>35 year old, White, Male, 26 Complaints, 0 Sustained</li>
              <li><b>Matthew Wirth</b><br>39 year old, White, Male, 20 Complaints, 0 Sustained</li>
            </ul>
          </div>
          <aside class="officer">
            <div class="hero"><svg viewBox="0 0 66 57"><path d="M0 0H66L33 57z" fill="#b9807f"/><path d="M3 3 65 1 33 41z" fill="#231f20"/></svg></div>
            <h3>Tamara Matthews</h3>
            <dl>
              <div class="desc">49 year old, black, female.</div>
              <div><dt>Badge</dt><dd>4640</dd></div>
              <div><dt>Rank</dt><dd>Police Officer</dd></div>
              <div><dt>Unit</dt><dd>Narcotics Division</dd><svg><use href="#chev"/></svg></div>
              <div><dt>Career</dt><dd>MAY 2, 1994 — Present</dd></div>
            </dl>
            <div class="gray">
              <div class="stats faded">
                <div><b>78</b><em>Allegations</em><small>More than 99.8% of other</small></div>
                <div><b class="or">1</b><em>Sustained</em><small>1 Disciplined</small></div>
              </div>
              <div class="go">View on the Data Tool<span><svg><use href="#arrow"/></svg></span></div>
            </div>
          </aside>
        </div>
      </div>
    </div>
    <div class="cell">
      <div class="shot new">
        <div class="topbar"><div class="field">Tamara M<svg><use href="#clear"/></svg></div><span>Cancel</span></div>
        <div class="split">
          <div class="list">
            <h4>OFFICER</h4>
            <ul>
              <li class="on"><b>Tamara Matthews</b><br>49 year old, Black, Female, <i class="bl">78 Complaints</i>, <i class="or">2 Sustained</i></li>
              <li><b>Tamara Keane</b><br>44 year old, White, Female, 4 Complaints, 1 Sustained</li>
              <li><b>Tamara Westphal</b><br>77 year old, White, Female, 0 Complaints, 0 Sustained</li>
            </ul>
          </div>
          <aside class="officer">
            <div class="addpin">add pin<svg><use href="#plus"/></svg></div>
            <div class="hero"><svg viewBox="0 0 60 45"><path d="M0 0H60L30 45z" fill="#f4a294"/><path d="M19.500 6.500 57 1 29 27z" fill="#231f20"/></svg></div>
            <h3>Tamara Matthews</h3>
            <dl>
              <div class="desc">36 year old, black, female.</div>
              <div class="tiny"><dt>Badge</dt><dd>4640</dd></div>
              <div class="tiny"><dt>Rank</dt><dd>Police Officer</dd></div>
              <div><dt>Unit</dt><dd>District 003</dd><svg><use href="#chev"/></svg></div>
              <div><dt>Career</dt><dd>May 1994 – Present</dd></div>
            </dl>
            <div class="gray">
              <div class="stats">
                <div><b>78</b><em>Allegations</em><small>More than 55% of other<br>officers</small></div>
                <div><b class="or">2</b><em>Sustained</em><small># Disciplined</small></div>
                <div><b>2</b><em>Use of Force Reports</em><small>More than ##% of other<br>officers</small></div>
                <div class="dim"><b>0</b><em>Civilian Compliments</em></div>
                <div><b>1</b><em>Major Awards</em></div>
                <div><b>6</b><em>Honorable Mentions</em><small>More than ##% of other<br>officers</small></div>
              </div>
              <div class="go">View Officer Profile<span><svg><use href="#arrow"/></svg></span></div>
            </div>
          </aside>
        </div>
      </div>
    </div>
    <p class="note">Expanded view of
preview panel and added
pin capability.</p>

    <!-- Row 4: community preview -->
    <div class="cell">
      <div class="shot old">
        <div class="bar"><i class="dot red"></i><i class="dot yel"></i><i class="dot grn"></i><span class="btn b-back"><svg><use href="#back"/></svg></span><span class="btn b-fwd"><svg><use href="#fwd"/></svg></span><span class="btn b-side"><svg><use href="#side"/></svg></span><span class="btn b-u"><svg><use href="#ublock"/></svg><em>1</em></span><span class="btn b-h"><svg><use href="#honey"/></svg></span><span class="btn url">staging.cpdp.co<svg><use href="#reload"/></svg></span><span class="btn b-dl"><svg><use href="#down"/></svg></span><span class="btn b-r"><svg><use href="#share"/></svg></span><span class="btn b-r"><svg><use href="#tabs"/></svg></span><span class="newtab"><svg><use href="#plus"/></svg></span></div>
        <div class="topbar"><div class="field">lincoln park<svg><use href="#clear"/></svg></div><span>Cancel</span></div>
        <div class="cats"><span>OFFICER</span><span>COMMUNITY</span><span>NEIGHBORHOOD</span><span>UNIT</span><span>UNIT &gt; OFFICERS</span><span>SCHOOL-GROUND</span></div>
        <div class="split">
          <div class="list places">
            <ul><li class="on">Lincoln Park</li></ul>
            <h4>NEIGHBORHOOD</h4>
            <ul><li>Lincoln Park</li></ul>
            <h4>UNIT</h4>
            <ul><li>Lincoln Park Zoo C/G</li></ul>
            <h4>UNIT &gt; OFFICERS</h4>
            <ul><li>James Gorman</li><li>John Guida</li><li>George Ambrose</li><li>Leonard Deangeles</li><li>James Gorman</li></ul>
          </div>
          <aside class="place">
            <h3>Lincoln Park</h3>
            <div class="census">
              <div><span>Population</span><b>66,959</b><span class="gap">Median Household<br>Income</span><b>$92,870</b></div>
              <table><tr><td>Race</td></tr><tr><td>White</td><th>80.2%</th></tr><tr><td>Hispanic</td><th>6.6%</th></tr><tr><td>Asian</td><th>5.7%</th></tr><tr><td>Black</td><th>4.8%</th></tr><tr><td>Other</td><th>2.8%</th></tr></table>
            </div>
            <div class="total"><div>784 allegations</div><svg><use href="#chev"/></svg></div>
            <div class="gray">
              <div class="box"><h5>MOST COMMON COMPLAINT</h5>
                <div class="it">Operation/Personnel Violations<br><span>76 allegations</span></div>
                <div class="it">Operation/Personnel Violations<br><span>42 allegations</span></div>
                <div class="it">Use Of Force<br><span>40 allegations</span></div>
              </div>
              <div class="box"><h5>OFFICERS WITH MOST COMPLAINTS</h5>
                <div class="it pic"><i>50 x 50</i><div>Tyrone Jenkins<br><span>7 allegations</span></div></div>
                <div class="it pic"><i>50 x 50</i><div>Christoph Traynor<br><span>6 allegations</span></div></div>
              </div>
            </div>
          </aside>
        </div>
      </div>
    </div>
    <div class="cell">
      <div class="shot new">
        <div class="topbar"><div class="field">West Englewood<svg><use href="#clear"/></svg></div><span>Cancel</span></div>
        <div class="split">
          <div class="list">
            <h4>OFFICER</h4>
            <ul>
              <li><b>Jeffery West</b><br>51 year old, Black, Male, 37 Complaints, 2 Sustained</li>
              <li><b>Cassie West</b><br>44 year old, White, Female, 4 Complaints, 1 Sustained</li>
              <li><b>Timothy Westbrooks</b><br>77 year old, White, Female, 0 Complaints, 0 Sustained</li>
              <li><b>Robert Weston</b><br>77 year old, White, Female, 0 Complaints, 0 Sustained</li>
            </ul>
            <h4 class="second">COMMUNITY</h4>
            <ul><li class="on lone"><b>West Englewood</b></li></ul>
          </div>
          <aside class="place">
            <div class="viewpins">view pins</div>
            <div class="pinned"><span>Officer</span><b>Tamara Matthews</b></div>
            <div class="addpin">add pin<svg><use href="#plus"/></svg></div>
            <h3>WEST ENGLEWOOD</h3>
            <div class="census">
              <div><span>Population</span><b>32,156</b><span class="gap">Median Household<br>Income</span><b>$27,203</b></div>
              <table><tr><td>Race</td></tr><tr><td>Black</td><th>92.3%</th></tr><tr><td>Hispanic</td><th>4.9%</th></tr><tr><td>Other</td><th>12.1%</th></tr><tr><td>White</td><th>0.7%</th></tr><tr><td>Asian</td><th>0.1%</th></tr></table>
            </div>
            <div class="total"><div>3972 allegations<br><span class="crimson">3.9% disciplined</span></div><svg><use href="#chev"/></svg></div>
            <div class="gray">
              <div class="box"><h5>MOST COMMON COMPLAINT</h5>
                <div class="it">Use of Force<br><span>304 allegations</span></div>
                <div class="it">Operation/Personnel Violations<br><span>287 allegations</span></div>
                <div class="it">Illegal Search<br><span>221 allegations</span></div>
              </div>
              <div class="box"><h5>OFFICERS WITH MOST COMPLAINTS</h5>
                <div class="it pic"><i></i><div>Broderick Jones<br><span>37 complaints in West Englewood</span></div></div>
                <div class="it pic"><i></i><div>Michael Dolan<br><span>29 complaints in West Englewood</span></div></div>
                <div class="it pic"><i></i><div>Timothy Madison<br><span>26 complaints in West Englewood</span></div></div>
              </div>
              <div class="go">View on the Data Tool<span><svg><use href="#arrow"/></svg></span></div>
            </div>
          </aside>
        </div>
      </div>
    </div>
    <p class="note">Added more information
to Community panels
and included previously
pinned panels above
“add pin” button.</p>
  </section>
</main>
</body>
</html>
```
FILE: styles.css
```css
* { box-sizing: border-box; }
html, body { margin: 0; background: #fff; }
body { overflow: hidden; }
h1, h2, h3, h4, h5, p, ul, dl, dd, dt { margin: 0; padding: 0; font-weight: 500; }
ul { list-style: none; }
i, em { font-style: normal; }
svg { display: block; flex: none; }
.defs { position: absolute; width: 0; height: 0; }

.page {
  zoom: 0.88334;
  width: 2623px;
  height: 4637px;
  padding-top: 161.4px;
  font-family: Inter, "Liberation Sans", sans-serif;
  color: #231f20;
}

/* Intro */
.intro { padding-left: 109.5px; }
.intro h1 { padding-left: 1px; font-size: 62.6px; line-height: 80px; font-weight: 300; letter-spacing: .035em; color: #cb0000; }
.intro p { margin-top: 46.5px; font-size: 36.3px; line-height: 48px; font-weight: 400; letter-spacing: .0256em; color: #8c8c8c; white-space: pre; }

.board {
  display: grid;
  grid-template-columns: 973px 973px 400px;
  grid-template-rows: 99.5px 808px 874px 874.3px 759px;
  column-gap: 53.5px;
  align-items: start;
  margin: 119.9px 0 0 107.5px;
}
.board h2 { padding-left: 2px; font-size: 45.5px; line-height: 55px; letter-spacing: .031em; color: #0058fb; white-space: nowrap; }
.board .h2-mine { padding-left: 13px; letter-spacing: .015em; }
.note { margin: 12.2px 0 0 5px; font-size: 26.8px; line-height: 36px; font-weight: 400; letter-spacing: .034em; color: #8c8c8c; white-space: pre; }

/* Frames */
.cell { position: relative; }
.shot { display: flex; flex-direction: column; border: 3px solid #969696; overflow: hidden; background: #fff; white-space: nowrap; }
.old { height: 593.5px; font-size: 10px; line-height: 12px; }
.new { height: 759px; font-size: 11px; line-height: 14px; }
.new.first { height: 693.5px; }
.mark { position: absolute; border: 4.6px solid #cb0000; }
.mark-pins { left: 898px; top: 2px; width: 49px; height: 76px; }
.mark-terms { left: 21.5px; top: 76px; width: 304px; height: 46px; border-width: 4.2px; }

/* Browser toolbar */
.bar { flex: none; display: flex; align-items: center; height: 29.5px; padding-left: 8.3px; background: linear-gradient(#ece9ec, #d5d2d5); border-top: 1px solid #6e6a6e; border-bottom: 1px solid #b2afb2; }
.dot { width: 9.4px; height: 9.4px; margin-right: 5.7px; border-radius: 50%; }
.red { background: #fc5b57; }
.yel { background: #fdbc2f; }
.grn { background: #28c940; }
.btn { position: relative; display: flex; align-items: center; justify-content: center; height: 16.3px; border-radius: 2.5px; background: #fbfbfb; box-shadow: 0 .5px 1px #bbb; }
.btn svg { width: 11px; height: 11px; }
.b-back { width: 17.5px; margin-left: 4.3px; }
.b-fwd { width: 18.8px; margin-left: 1.5px; }
.b-side { width: 28px; margin-left: 7.7px; }
.b-side svg { width: 13px; }
.b-u { width: 28px; margin-left: 86.3px; }
.b-u svg { width: 13px; height: 13px; }
.b-u em { position: absolute; right: -3px; top: .5px; width: 9.4px; height: 9.4px; border-radius: 50%; background: #fb3b30; color: #fff; font-size: 7.5px; line-height: 9.4px; text-align: center; }
.b-h { width: 28px; margin-left: 6px; }
.b-h svg { height: 13px; }
.url { width: 395.7px; margin-left: 6px; font-size: 9.5px; font-weight: 400; letter-spacing: -.032em; color: #333; }
.url > svg { position: absolute; right: 3px; top: 2.6px; }
.add { position: absolute; left: 4px; top: 3px; display: grid; place-items: center; width: 10px; height: 10px; border: .8px solid #888; border-radius: 50%; color: #888; }
.add svg { width: 6px; height: 6px; }
.b-dl { width: 27.5px; margin-left: 166.5px; }
.b-r { width: 27.5px; margin-left: 6.5px; }
.newtab { align-self: flex-end; display: grid; place-items: center; width: 17.5px; height: 18px; margin-left: 6px; background: #bdbabd; border-left: 1px solid #a8a5a8; color: #888; }
.newtab svg { width: 9px; height: 9px; }

/* Landing header */
.home-head { flex: none; display: flex; align-items: flex-start; }
.brand { color: #8e8e8e; font-weight: 400; }
.brand b { font-weight: 600; color: #231f20; }
.home-head nav { display: flex; color: #1259ee; }
.find { display: flex; align-items: center; justify-content: space-between; border: 1px solid #dcdcdc; background: #f3f3f3; }
.old .home-head { height: 76.5px; border-bottom: 1px solid #e6e6e6; }
.old .brand { flex: 0 0 559.5px; padding: 18.6px 0 0 11.2px; line-height: 13.7px; letter-spacing: .008em; }
.old .find { width: 207.7px; height: 30px; margin: 23px 34.8px 0 0; padding: 0 10px; color: #aaa; font-weight: 500; }
.old .find svg { width: 14px; height: 14px; }
.old .home-head nav { padding-top: 32.6px; font-weight: 600; letter-spacing: -.005em; }
.old nav a + a { margin-left: 35.3px; }

.first .home-head { height: 66px; border-bottom: 1.5px solid #d8d8d8; font-size: 11px; }
.first .brand { flex: 0 0 477.3px; padding: 13px 0 0 26.4px; line-height: 13.6px; color: #999; }
.first .brand b { font-weight: 500; color: #111; }
.first .find { width: 227px; height: 33.4px; margin: 15px 38.7px 0 0; padding: 0 27px 2px 13.5px; letter-spacing: -.017em; }
.first .find svg { width: 18px; height: 18px; margin-top: 2px; }
.first .home-head nav { padding-top: 28px; letter-spacing: -.017em; }
.first nav a + a { margin-left: 26px; }

/* Map */
.map { position: relative; flex: none; overflow: hidden; }
.map-a { height: 478px; }
.map-b { height: 592px; }
.tiles { width: 967px; height: 100%; }
.tiles path { vector-effect: non-scaling-stroke; }
.roads { fill: none; stroke: #fff; stroke-width: .8px; opacity: .8; }
.hiways { fill: none; stroke: #fff; stroke-width: 2px; stroke-linejoin: round; }
.rivers { fill: none; stroke: #cdd5d6; stroke-width: 1px; stroke-dasharray: 4 2; }
.state { fill: none; stroke: #b9b3b3; stroke-width: 1.1px; stroke-dasharray: 6 2; }
.lo { opacity: .14; }
.mid { opacity: .28; }
.map-a .mid { opacity: .25; }
.hi { opacity: .64; }
.map-a .hi { opacity: .6; }
.cores { fill: #ff3432; }
.edges { fill: none; stroke: #1d8196; stroke-width: 1.1px; opacity: .85; }
.labels text { font-family: "Open Sans", Inter, sans-serif; font-size: 16.5px; fill: #a0a0a6; paint-order: stroke; stroke: rgba(255, 255, 255, .5); stroke-width: 1.5px; }
.labels .town { font-size: 20px; fill: #55555a; }
.labels .city { font-size: 25px; fill: #4a4a50; fill-opacity: .7; stroke: none; }
.labels.big text { font-size: 22px; }
.labels.big .town { font-size: 27px; }
.labels.big .city { font-size: 36px; fill-opacity: .9; stroke: none; }
.mapbox { fill: #fff; stroke: #999; stroke-width: 1px; }
.mapbox text { font-size: 13px; font-weight: 700; }
.mapbox .ox { font-size: 17px; }
.zoomer { position: absolute; left: 6.5px; top: 7px; width: 23.5px; border: 1px solid #d5d5d5; border-radius: 3px; background: #fff; }
.zoomer b { display: block; height: 23px; line-height: 22px; font-size: 15px; text-align: center; color: #222; border-bottom: 1px solid #ddd; }
.zoomer .compass { display: flex; flex-direction: column; align-items: center; justify-content: center; gap: 1px; border: 0; }
.compass::before { content: ""; border: 3px solid transparent; border-top: 0; border-bottom: 6px solid #222; }
.compass::after { content: ""; border: 3px solid transparent; border-bottom: 0; border-top: 6px solid #bbb; }

.card, .cta-map { position: absolute; }
.card { background: #fff; border: 1px solid #e0e0e0; border-top: 0; border-left: 0; }
.card svg { color: #a8a8a8; width: 7px; height: 11px; }
.c-title, .c-h { font-weight: 600; }
.c-big, .c-item { display: flex; justify-content: space-between; align-items: center; }
.c-item { font-weight: 500; }
.c-item span { color: #999; font-weight: 400; }
.crimson { color: #cb0000; }
.cta-map { background: #cddffd; border: 1.5px solid #3a7bee; color: #1463f3; font-weight: 500; }
.cm-top { display: flex; justify-content: space-between; }

.map-a .card { left: 581.7px; top: 46px; width: 242.5px; height: 282px; padding: 0 13px 0 13.3px; }
.map-a .c-title { height: 47.5px; padding-top: 18.4px; letter-spacing: -.018em; border-bottom: 1.5px solid #e0e0e0; }
.map-a .c-big { height: 78.2px; font-size: 18.2px; line-height: 23px; font-weight: 500; letter-spacing: .026em; border-bottom: 1.5px solid #e0e0e0; }
.map-a .c-big .crimson { letter-spacing: .007em; }
.map-a .c-h { padding-top: 15.7px; letter-spacing: -.04em; }
.map-a .c-item { height: 42px; letter-spacing: .013em; border-top: 1.5px solid #e0e0e0; padding-bottom: 3.5px; }
.map-a .c-h + .c-item { height: 45px; padding-top: 7px; border: 0; }
.map-a .cta-map { left: 581.7px; top: 334.7px; width: 242.5px; height: 87px; padding: 16.9px 12px 0; }
.map-a .cm-top { height: 40.8px; border-bottom: 1.5px solid #3a7bee; letter-spacing: .006em; }
.map-a .cm-top svg { width: 12px; height: 8px; margin-top: 8.5px; }
.map-a .cm-or { padding-top: 7.5px; }
.map-a .cm-or span { color: #3c2a98; }
.credit { position: absolute; right: 2px; bottom: 2px; color: #333; font-family: "Liberation Sans", sans-serif; background: rgba(255, 255, 255, .4); }
.map-a .credit { font-size: 9.6px; letter-spacing: -.012em; }
.chat { position: absolute; left: 908px; top: 421.5px; display: grid; place-items: center; width: 45px; height: 45px; border-radius: 50%; background: #2b2b2b; }
.chat svg { width: 21px; height: 24px; }

.map-b .card { left: 609.3px; top: 44px; width: 302px; height: 371.7px; padding: 0 14.7px; font-size: 11.8px; line-height: 15px; }
.map-b .c-title { height: 61.5px; padding-top: 22.5px; font-weight: 500; font-size: 11.5px; letter-spacing: .055em; border-bottom: 1.5px solid #e0e0e0; }
.map-b .c-big { height: 98px; font-size: 21.7px; line-height: 30.3px; font-weight: 500; letter-spacing: .047em; border-bottom: 1.5px solid #e0e0e0; }
.map-b .c-big .crimson { letter-spacing: .032em; }
.map-b .c-h { padding-top: 18px; font-weight: 500; letter-spacing: .005em; }
.map-b .c-item { height: 53px; letter-spacing: .038em; border-top: 1.5px solid #e0e0e0; padding-bottom: 1.5px; }
.map-b .c-h + .c-item { height: 62px; padding-top: 8px; border: 0; }
.map-b .card svg { width: 9px; height: 14px; }
.map-b .cta-map { left: 609.3px; top: 422.5px; width: 302px; height: 115.5px; padding: 21px 7px 0 13.5px; font-size: 11.8px; line-height: 17.2px; letter-spacing: .043em; }
.map-b .cm-top { height: 56px; border-bottom: 1.5px solid #3a7bee; }
.map-b .cm-top svg { width: 15px; height: 11px; margin: 12px 4px 0 0; }
.map-b .cm-or { padding-top: 9px; letter-spacing: .034em; }
.map-b .cm-or span { text-decoration: underline; }
.map-b .credit { right: auto; left: 779px; bottom: 2px; padding: 5px 6px; font-size: 15.4px; line-height: 18px; }

/* Search bar */
.topbar { flex: none; display: flex; align-items: flex-start; }
.topbar .field { display: flex; align-items: center; justify-content: space-between; background: #f3f3f3; }
.old .topbar { height: 37.5px; margin: 0 11px; padding-top: 5.5px; border-bottom: 1.5px solid #e6e6e6; justify-content: space-between; line-height: 25.2px; font-weight: 500; color: #8e8e8e; }
.old .field { width: 896.5px; height: 24.4px; padding: .6px 8px 0 7px; color: #231f20; }
.old .field svg { width: 13px; height: 13px; color: #999; }
.old .field.ghost { color: #8e8e8e; padding-right: 12.5px; }
.old .field small { font-size: 10px; font-weight: 500; letter-spacing: -.027em; }
.topbar .blue { color: #1259ee; font-weight: 700; letter-spacing: -.03em; }
.new .topbar { height: 42.5px; margin: 0 18px 0 13px; padding: 10.2px 0 0 11.5px; border-bottom: 2px solid #e4e4e4; line-height: 24.7px; font-weight: 500; }
.new .field { width: 862.3px; height: 23.7px; margin-right: 13.2px; padding: 0 11.5px 0 14.5px; border-radius: 5px; font-size: 11.4px; letter-spacing: .01em; }
.new .field.strong { letter-spacing: .038em; color: #111; }
.new .field svg { width: 14px; height: 14px; color: #d8d8d8; }

/* Term lists */
.terms { flex: 1 0 auto; background: #f9f9f9; }
.old .terms { width: 725.7px; padding: 37.4px 0 0 11px; }
.old .terms h3 { font-size: 19px; line-height: 24px; font-weight: 400; }
.old .terms h4 { margin-top: 37px; font-weight: 700; letter-spacing: -.039em; }
.old .terms ul { margin-top: 7.4px; width: 505px; }
.old .terms ul + h4 { margin-top: 25.5px; }
.old .terms li { height: 31.05px; padding-top: 9.3px; border-bottom: 1.5px solid #e4e4e4; font-weight: 400; letter-spacing: .006em; color: #a8a8a8; }
.new .terms { width: 700px; margin-top: 32.7px; padding: 18px 0 0 33px; font-size: 11.4px; }
.new .terms p { padding-left: 1.7px; font-weight: 400; letter-spacing: -.018em; color: #1463f3; }
.new .terms h3 { margin-top: 17.5px; font-size: 15.2px; line-height: 20px; font-weight: 400; }
.new .terms h4 { margin-top: 20.5px; font-size: 10.8px; font-weight: 600; letter-spacing: -.037em; color: #111; }
.new .terms ul { margin: 4.8px 0 0 -2px; width: 649px; }
.new .terms ul + h4 { margin-top: 31px; }
.new .terms h4 ~ h4 + ul { margin-top: 10px; }
.new .terms li { height: 25.75px; padding: 5.3px 0 0 2px; border-bottom: 1.5px solid #e0e0e0; font-weight: 400; letter-spacing: .005em; }

/* Results */
.cats { flex: none; display: flex; height: 33px; margin: 0 11px; border-bottom: 1px solid #e0e0e0; padding-top: 11px; color: #8e8e8e; font-weight: 400; letter-spacing: -.014em; }
.cats span { margin-right: 18.3px; }
.split { flex: 1 0 0; display: flex; min-height: 0; }
.list { flex: none; background: #f9f9f9; }
.on { background: #e1eafd; }
.bl { color: #1463f3; }
.or { color: #fb6520; }
.old .list { width: 725.7px; padding: 30px 12px 0 11px; }
.old .list h4 { font-weight: 600; letter-spacing: -.007em; }
.old .list ul { margin-top: 6.5px; }
.old .list li { height: 40.9px; padding-top: 8.2px; border-bottom: 1.5px solid #e4e4e4; font-size: 9.3px; line-height: 11.5px; font-weight: 400; letter-spacing: -.037em; color: #999; }
.list li b { font-weight: 500; color: #231f20; }
.old .list li b { font-size: 10px; letter-spacing: .003em; }
.list i { font-weight: 500; }
.list .on b { color: #1463f3; }
.old .list .on { margin: 0 -12px 0 -11px; padding-left: 11px; }
.old .list.places { padding-top: 0; }
.old .list.places ul { margin-top: 0; }
.old .list.places li { padding-top: 9px; font-size: 10px; line-height: 12px; letter-spacing: 0; color: #231f20; }
.old .list.places .on { color: #1463f3; }
.old .list.places h4 { padding-top: 30px; margin-bottom: 6.4px; }
.old .list.places h4 + ul > li:first-child { height: 41px; }

.new .split { margin-top: 33px; }
.new .list { width: 724px; margin-right: -6.3px; padding-top: 26.3px; }
.new .list h4 { padding-left: 33px; font-size: 10.8px; line-height: 12px; font-weight: 600; letter-spacing: -.01em; }
.new .list ul { margin-top: 4px; border-top: 1.5px solid #dcdcdc; }
.new .list li { height: 47.1px; padding: 7.4px 0 0 33.5px; border-bottom: 1.5px solid #dcdcdc; font-weight: 400; line-height: 13.5px; letter-spacing: .002em; color: #8e8e8e; }
.new .list li b { letter-spacing: -.003em; }
.new .list .second { margin-top: 21px; }
.new .list .lone { padding-top: 10px; }

/* Preview panel */
aside { position: relative; flex: 1; display: flex; flex-direction: column; background: #fff; border-left: 1px solid #dedede; }
aside > * { flex: none; }
.new aside { align-self: flex-start; }
.gray { background: #f3f3f3; }
.old .gray { flex: 1 0 auto; }
.hero { display: flex; justify-content: center; }
.old .hero { height: 91px; padding-top: 17px; background: #6e0002; }
.old .hero svg { width: 66px; height: 57px; }
.new .hero { height: 80.5px; padding-top: 18px; background: #ee4a2c; }
.new .hero svg { width: 60px; height: 45px; }
.addpin { display: flex; align-items: center; justify-content: center; gap: 5px; height: 19.8px; background: #e1eafd; border: 1px solid #c6d3ea; font-weight: 500; font-size: 9.2px; letter-spacing: -.03em; word-spacing: 1px; }
.addpin svg { width: 11.5px; height: 11.5px; color: #1463f3; }
.old .officer h3 { height: 48.5px; padding: 13px 0 0 6.8px; font-size: 18.6px; line-height: 24px; letter-spacing: .015em; }
.old dl { padding: 0 5px 0 6.8px; }
.old dl > div { display: flex; align-items: center; height: 29.5px; border-top: 1.5px solid #e4e4e4; }
.old dt { width: 72px; color: #8e8e8e; font-weight: 400; }
dl svg { margin-left: auto; width: 6px; height: 10px; color: #aaa; }
.old .officer .gray { padding: 6px 5px 0 6.8px; }
.stats { display: grid; grid-template-columns: 1fr 1fr; background: #fff; border: 1px solid #e2e2e2; text-align: center; }
.stats b, .stats em, .stats small { display: block; }
.stats b { font-weight: 400; }
.stats small { color: #999; font-weight: 400; }
.faded { position: relative; height: 85px; margin-bottom: 11.5px; border-bottom: 0; overflow: hidden; }
.faded::before { content: ""; position: absolute; left: 50%; top: 7px; width: 1px; height: 70px; background: #ccc; }
.faded::after { content: ""; position: absolute; inset: 0 -1px 0 -1px; background: linear-gradient(rgba(243, 243, 243, 0), rgba(243, 243, 243, .42) 52%, rgba(243, 243, 243, .62) 76%, rgba(243, 243, 243, .78) 88%, #f3f3f3); }
.faded div { padding-top: 31px; }
.faded b { font-size: 18px; line-height: 22px; color: #231f20; letter-spacing: -.02em; }
.faded b.or { color: #ff5a10; font-weight: 500; }
.faded em { margin-top: 3px; color: #444; }
.faded small { font-size: 9.2px; line-height: 10px; letter-spacing: -.03em; }
.go { display: flex; align-items: center; justify-content: space-between; height: 29.6px; padding: 0 12px; background: #cddffd; color: #1463f3; font-weight: 500; }
.go span { display: grid; place-items: center; width: 41px; height: 20.5px; border: 1.2px solid #1463f3; border-radius: 1.5px; }
.go svg { width: 9px; height: 8px; }

.new .officer h3 { height: 44px; padding: 11.4px 0 0 5.3px; font-size: 16.5px; line-height: 22px; font-weight: 400; letter-spacing: .019em; }
.new dl { padding: 0 4px 0 5.3px; font-size: 9.5px; letter-spacing: -.02em; }
.new dl > div { display: flex; align-items: center; height: 26.7px; border-top: 2px solid #eee; }
.new dt { width: 81px; color: #999; font-weight: 400; }
.new .desc { font-size: 9.8px; letter-spacing: -.038em; font-weight: 500; }
.new dl .tiny { font-size: 8.2px; }
.new .officer .gray { padding: 5.5px 4.4px 11px 4.8px; border-bottom: 1px solid #ddd; }
.new .stats { position: relative; height: 307.3px; grid-template-rows: repeat(3, 102.3px); padding: 0 5.5px; margin-bottom: 5.4px; }
.new .stats::before { content: ""; position: absolute; left: 50%; top: 5px; bottom: 5px; width: 1.2px; background: #ccc; }
.new .stats > div { padding-top: 27.5px; border-bottom: 1.2px solid #c6c6c6; }
.new .stats > div:nth-last-child(-n+2) { border: 0; }
.new .stats b { font-size: 16.5px; line-height: 18px; letter-spacing: -.02em; }
.new .stats em { font-size: 9.4px; line-height: 13px; letter-spacing: -.02em; }
.new .stats small { margin-top: 1.8px; font-size: 7.8px; line-height: 9.2px; letter-spacing: -.01em; }
.new .dim { color: #999; }
.new .dim em { font-weight: 400; }
.new .go { height: 27.3px; font-size: 9.5px; letter-spacing: -.022em; }
.new .go span { height: 18px; }

/* Community panel */
.census { display: flex; justify-content: space-between; background: #f3f3f3; color: #8e8e8e; }
.census span, .census b { display: block; font-weight: 400; }
.census b { color: #231f20; font-weight: 500; }
.census table { border-collapse: collapse; line-height: inherit; }
.census td, .census th { padding: 0; font-weight: 400; text-align: left; }
.census th { font-weight: 500; text-align: right; color: #231f20; }
.total { display: flex; align-items: center; justify-content: space-between; }
.total svg { width: 7px; height: 11px; color: #b5b5b5; }
.box { background: #fff; border: 1px solid #dedede; }
.it { border-top: 1.2px solid #e2e2e2; font-weight: 500; }
.it span { color: #999; font-weight: 400; }
.box h5 + .it { border: 0; }
.pic { display: flex; }
.pic i { display: grid; place-items: center; background: #c9c9c9; color: #aaa; font-size: 4px; line-height: 4px; }

.old .place h3 { height: 49px; padding: 19.3px 0 0 12.8px; font-weight: 600; font-size: 10px; letter-spacing: .01em; }
.old .census { height: 114.2px; padding: 0 11px 0 12.8px; }
.old .census div { padding-top: 8.4px; line-height: 12.3px; }
.old .census b { margin-top: 4.3px; }
.old .census .gap { margin-top: 8.2px; }
.old .census table { width: 96.5px; height: 100.2px; margin-top: 6px; }
.old .census tr { height: 16.7px; }
.old .total { height: 54.6px; padding: 0 10.5px 0 12.8px; font-size: 19px; line-height: 24px; font-weight: 500; }
.old .place .gray { padding: 4.4px 5px 0 6.8px; }
.old .box { padding: 12.7px 11.5px 0; height: 161.7px; margin-bottom: 5px; }
.old .box h5 { font-size: 10px; font-weight: 600; letter-spacing: -.03em; }
.old .it { padding-top: 8.5px; height: 43.3px; letter-spacing: .014em; }
.old h5 + .it { padding-top: 10px; height: 43.5px; }
.old .pic i { width: 24px; height: 24px; margin-right: 9.5px; }

.viewpins { height: 15.6px; padding: 2.5px 0 0 11px; background: #e1eafd; color: #1463f3; font-size: 8px; line-height: 10px; }
.pinned { display: flex; justify-content: space-between; align-items: center; height: 14.7px; padding: 2px 17px 0 11px; font-size: 8px; line-height: 10px; color: #999; }
.pinned span, .pinned b { font-weight: 400; }
.pinned span { font-size: 7.5px; }
.place .addpin { height: 21px; }
.new .place { font-size: 9.3px; letter-spacing: -.01em; }
.new .place h3 { height: 43.4px; padding-left: 12px; font-size: 9.3px; line-height: 43.4px; letter-spacing: -.063em; }
.new .census { height: 109.3px; padding: 0 10.7px 0 12px; }
.new .census div { padding-top: 8.4px; line-height: 11px; }
.new .census b { margin-top: 5.2px; }
.new .census .gap { margin-top: 10.6px; }
.new .census .gap + b { margin-top: 6.6px; }
.new .census table { width: 100.3px; height: 98.4px; margin-top: 5.7px; }
.new .census tr { height: 16.4px; }
.new .total { height: 50px; padding: 0 8px 0 12px; border-bottom: 1px solid #ddd; font-size: 17px; line-height: 21px; font-weight: 500; letter-spacing: -.004em; }
.new .total .crimson { display: block; margin-left: -1px; font-size: 12.2px; line-height: 16px; letter-spacing: .02em; }
.new .place .gray { padding: 6.2px 2.4px 4px 3px; border-bottom: 1px solid #ddd; }
.new .box { height: 148.6px; padding: 10.9px 12px 0; margin-bottom: 6px; line-height: 12px; }
.new .box + .box { height: 150.2px; }
.new .box h5 { font-size: 9.3px; letter-spacing: -.052em; }
.new .it { height: 37.8px; padding-top: 5.4px; letter-spacing: -.007em; }
.new h5 + .it { height: 44.2px; padding-top: 13px; }
.new .pic i { width: 25.5px; height: 22px; margin: .7px 6px 0 0; background: #d6d6d6; }
.new .place .go { margin: 0 1px; }
```
